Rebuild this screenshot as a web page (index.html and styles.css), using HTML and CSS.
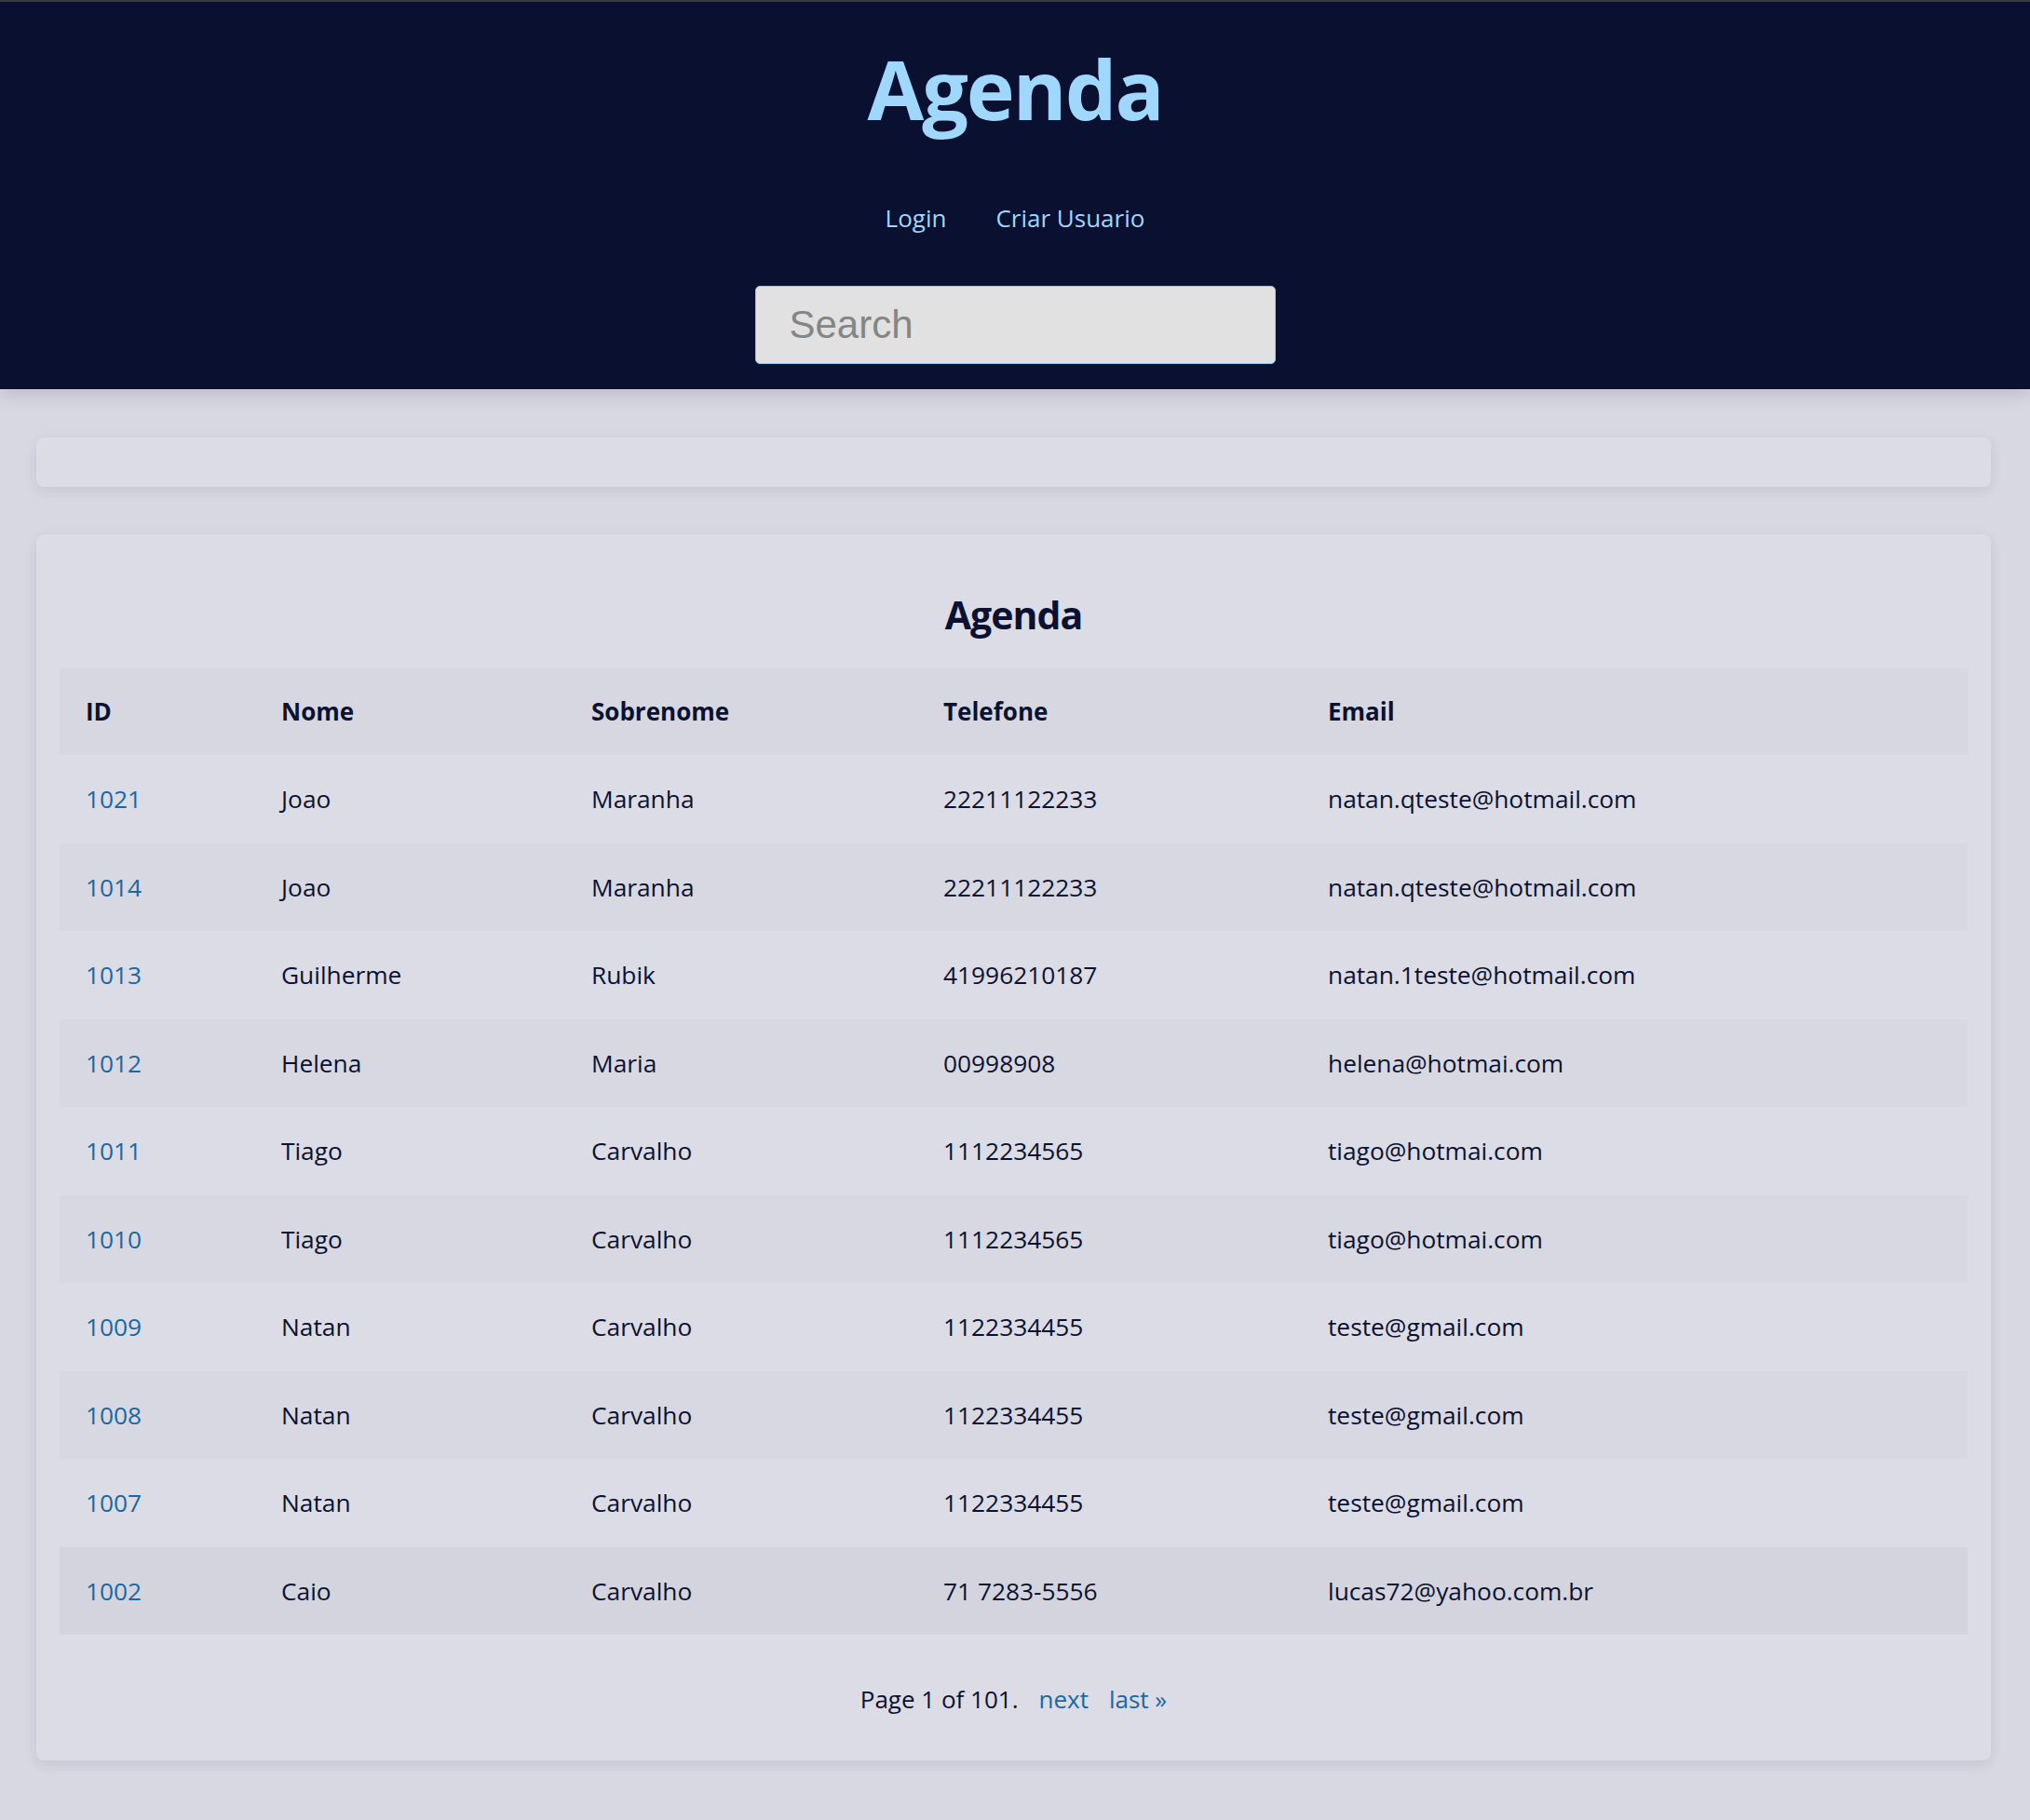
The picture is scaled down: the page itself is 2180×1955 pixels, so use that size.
FILE: index.html
```html
<!DOCTYPE html>
<html lang="pt">
<head>
<meta charset="utf-8">
<title>Agenda</title>
<link rel="stylesheet" href="styles.css">
</head>
<body>
<header class="topbar">
  <h1 class="brand">Agenda</h1>
  <nav class="nav">
    <a class="nav-link" href="#">Login</a>
    <a class="nav-link" href="#">Criar Usuario</a>
  </nav>
  <input class="search" type="text" placeholder="Search">
</header>
<main class="content">
  <section class="card card-empty"></section>
  <section class="card card-table">
    <h2 class="card-title">Agenda</h2>
    <table class="grid">
      <colgroup>
        <col class="c-id"><col class="c-nome"><col class="c-sob"><col class="c-tel"><col class="c-email">
      </colgroup>
      <thead>
        <tr><th>ID</th><th>Nome</th><th>Sobrenome</th><th>Telefone</th><th>Email</th></tr>
      </thead>
      <tbody>
        <tr><td><a href="#">1021</a></td><td>Joao</td><td>Maranha</td><td>22211122233</td><td>natan.qteste@hotmail.com</td></tr>
        <tr><td><a href="#">1014</a></td><td>Joao</td><td>Maranha</td><td>22211122233</td><td>natan.qteste@hotmail.com</td></tr>
        <tr><td><a href="#">1013</a></td><td>Guilherme</td><td>Rubik</td><td>41996210187</td><td>natan.1teste@hotmail.com</td></tr>
        <tr><td><a href="#">1012</a></td><td>Helena</td><td>Maria</td><td>00998908</td><td>helena@hotmai.com</td></tr>
        <tr><td><a href="#">1011</a></td><td>Tiago</td><td>Carvalho</td><td>1112234565</td><td>tiago@hotmai.com</td></tr>
        <tr><td><a href="#">1010</a></td><td>Tiago</td><td>Carvalho</td><td>1112234565</td><td>tiago@hotmai.com</td></tr>
        <tr><td><a href="#">1009</a></td><td>Natan</td><td>Carvalho</td><td>1122334455</td><td>teste@gmail.com</td></tr>
        <tr><td><a href="#">1008</a></td><td>Natan</td><td>Carvalho</td><td>1122334455</td><td>teste@gmail.com</td></tr>
        <tr><td><a href="#">1007</a></td><td>Natan</td><td>Carvalho</td><td>1122334455</td><td>teste@gmail.com</td></tr>
        <tr class="row-hover"><td><a href="#">1002</a></td><td>Caio</td><td>Carvalho</td><td>71 7283-5556</td><td>lucas72@yahoo.com.br</td></tr>
      </tbody>
    </table>
    <div class="pager">
      <span class="pager-info">Page 1 of 101.</span>
      <a class="pager-link" href="#">next</a>
      <a class="pager-link" href="#">last &raquo;</a>
    </div>
  </section>
</main>
</body>
</html>
```

FILE: styles.css
```css
html, body {
  margin: 0;
  padding: 0;
}
body {
  background: #d8d8e3;
  color: #0b1130;
  font-family: "Open Sans", "Noto Sans", sans-serif;
  font-size: 26px;
}
a {
  text-decoration: none;
}

.topbar {
  background: #0a1030;
  border-top: 2px solid #3a3b42;
  padding: 43px 0 27px;
  display: flex;
  flex-direction: column;
  align-items: center;
  box-shadow: 0 6px 18px rgba(0, 0, 0, 0.13);
}
.brand {
  margin: 0;
  font-size: 88px;
  line-height: 100px;
  font-weight: 700;
  letter-spacing: -2px;
  color: #9fd7fd;
}
.nav {
  margin-top: 69px;
  display: flex;
  gap: 53px;
  line-height: 40px;
}
.nav-link {
  color: #9fd7fd;
  font-size: 26px;
}
.search {
  margin-top: 53px;
  box-sizing: border-box;
  width: 559px;
  height: 84px;
  padding: 0 36px;
  background: #e1e1e1;
  border: 1px solid #8ec8f0;
  border-radius: 5px;
  font-family: "Liberation Sans", Arial, sans-serif;
  font-size: 42px;
  color: #333;
  outline: none;
}
.search::placeholder {
  color: #858585;
}

.content {
  padding: 52px 42px 64px 39px;
  display: flex;
  flex-direction: column;
  gap: 51px;
}
.card {
  background: #dcdce6;
  border-radius: 8px;
  box-shadow: 0 4px 14px rgba(40, 40, 80, 0.10);
}
.card-empty {
  height: 53px;
}
.card-table {
  padding: 61px 25px 46px;
}
.card-title {
  margin: 0 0 32px;
  text-align: center;
  font-size: 41px;
  line-height: 50px;
  font-weight: 700;
  letter-spacing: -1px;
  color: #0b1130;
}

.grid {
  width: 100%;
  border-collapse: collapse;
  table-layout: fixed;
}
.c-id { width: 210px; }
.c-nome { width: 333px; }
.c-sob { width: 378px; }
.c-tel { width: 413px; }
.grid th,
.grid td {
  text-align: left;
  padding: 0 0 0 28px;
  vertical-align: middle;
  white-space: nowrap;
}
.grid thead tr {
  height: 94px;
  background: #d7d7e1;
}
.grid th {
  font-weight: 700;
  font-size: 26px;
  color: #0b1130;
}
.grid td {
  font-size: 26.3px;
}
.grid tbody tr {
  height: 94.5px;
}
.grid tbody tr:nth-child(even) {
  background: #d8d8e2;
}
.grid tbody tr.row-hover {
  background: #d4d4de;
}
.grid td a {
  color: #1a67a3;
}

.pager {
  margin-top: 49px;
  display: flex;
  justify-content: center;
  gap: 22px;
  line-height: 40px;
}
.pager-link {
  color: #1a67a3;
}
```
